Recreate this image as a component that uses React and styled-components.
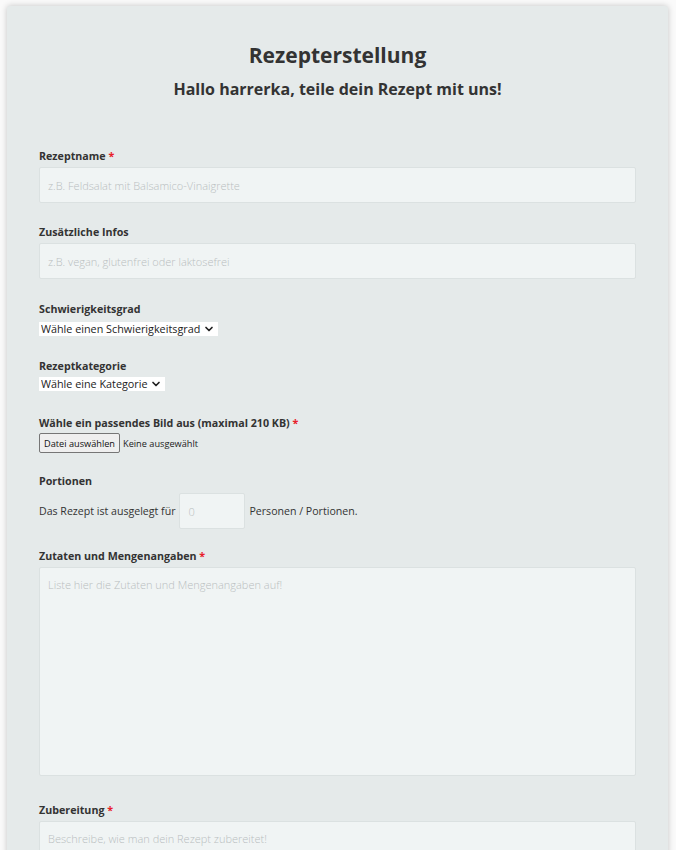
import React from "react";
import styled, { createGlobalStyle } from "styled-components";
import { ChevronDown } from "lucide-react";

const Global = createGlobalStyle`
    body {
        margin: 0;
        background: #fafafa;
        font-family: "Open Sans", "Liberation Sans", sans-serif;
        color: #333;
    }
`;

function Dropdown({ options, top }) {
    return (
        <SelectWrap $top={top}>
            <Select defaultValue="">
                {options.map((o) => (
                    <option key={o.value} value={o.value}>{o.label}</option>
                ))}
            </Select>
            <Chevron size={12} strokeWidth={3.4} />
        </SelectWrap>
    );
}

function App() {
    return (
        <Page>
            <Global />
            <Card>
                <Title>Rezepterstellung</Title>
                <Subtitle>Hallo harrerka, teile dein Rezept mit uns!</Subtitle>

                <Field $top={48}>
                    <Label>Rezeptname <Req>*</Req></Label>
                    <TextInput type="text" placeholder="z.B. Feldsalat mit Balsamico-Vinaigrette" />
                </Field>

                <Field $top={22}>
                    <Label>Zusätzliche Infos</Label>
                    <TextInput type="text" placeholder="z.B. vegan, glutenfrei oder laktosefrei" />
                </Field>

                <Field $top={23}>
                    <Label>Schwierigkeitsgrad</Label>
                    <Dropdown top={2} options={[
                        { value: "", label: "Wähle einen Schwierigkeitsgrad" },
                        { value: "1", label: "leicht" },
                        { value: "2", label: "mittel" },
                        { value: "3", label: "schwer" },
                    ]} />
                </Field>

                <Field $top={23}>
                    <Label>Rezeptkategorie</Label>
                    <Dropdown top={0} options={[
                        { value: "", label: "Wähle eine Kategorie" },
                        { value: "v", label: "Vorspeise" },
                        { value: "h", label: "Hauptspeise" },
                        { value: "d", label: "Dessert" },
                    ]} />
                </Field>

                <Field $top={25}>
                    <Label>Wähle ein passendes Bild aus (maximal 210 KB) <Req>*</Req></Label>
                    <FileRow>
                        <FileButton>
                            Datei auswählen
                            <HiddenFile type="file" accept="image/*" />
                        </FileButton>
                        <FileName>Keine ausgewählt</FileName>
                    </FileRow>
                </Field>

                <Field $top={21}>
                    <Label>Portionen</Label>
                    <PortionRow>
                        <span>Das Rezept ist ausgelegt für</span>
                        <NumberInput type="number" placeholder="0" />
                        <span>Personen / Portionen.</span>
                    </PortionRow>
                </Field>

                <Field $top={20}>
                    <Label>Zutaten und Mengenangaben <Req>*</Req></Label>
                    <TextArea $height={209} placeholder="Liste hier die Zutaten und Mengenangaben auf!" />
                </Field>

                <Field $top={27}>
                    <Label>Zubereitung <Req>*</Req></Label>
                    <TextArea $height={209} placeholder="Beschreibe, wie man dein Rezept zubereitet!" />
                </Field>
            </Card>
        </Page>
    );
}

export default App;

//styled-components
const Page = styled.div`
    padding: 6px 8px 40px 7px;
`;

const Card = styled.div`
    background-color: #e5eaea;
    border-radius: 3px;
    box-shadow: 0 0 6px rgba(0, 0, 0, 0.22);
    padding: 34px 32px 30px 32px;
`;

const Title = styled.h1`
    margin: 0;
    text-align: center;
    font-size: 21px;
    line-height: 30px;
    font-weight: 700;
    color: #333;
`;

const Subtitle = styled.h2`
    margin: 7px 0 0 0;
    text-align: center;
    font-size: 16px;
    line-height: 24px;
    font-weight: 700;
    color: #333;
`;

const Field = styled.div`
    margin-top: ${props => props.$top}px;
    display: flex;
    flex-direction: column;
    align-items: flex-start;
`;

const Label = styled.label`
    display: block;
    font-size: 10.7px;
    line-height: 14px;
    font-weight: 700;
    color: #333;
    margin-bottom: 4px;
`;

const Req = styled.span`
    color: #e8202a;
`;

const TextInput = styled.input`
    box-sizing: border-box;
    width: 100%;
    height: 36px;
    padding: 0 8px;
    border: 1px solid #dbe1e1;
    border-radius: 2px;
    background: #f0f4f4;
    font-family: "Open Sans", "Liberation Sans", sans-serif;
    font-size: 11px;
    font-weight: 300;
    color: #333;
    outline: none;
    &::placeholder {
        color: #b9bebf;
    }
`;

const TextArea = styled.textarea`
    box-sizing: border-box;
    width: 100%;
    height: ${props => props.$height}px;
    padding: 9px 8px;
    border: 1px solid #dbe1e1;
    border-radius: 2px;
    background: #f0f4f4;
    font-family: "Open Sans", "Liberation Sans", sans-serif;
    font-size: 11px;
    font-weight: 300;
    color: #333;
    resize: none;
    outline: none;
    &::placeholder {
        color: #b9bebf;
    }
`;

const SelectWrap = styled.div`
    position: relative;
    display: inline-flex;
    align-items: center;
    height: 14px;
    margin-top: ${props => props.$top}px;
    background: #fff;
`;

const Select = styled.select`
    appearance: none;
    -webkit-appearance: none;
    height: 14px;
    margin: 0;
    padding: 0 17px 0 2px;
    border: none;
    border-radius: 0;
    background: transparent;
    font-family: "Open Sans", "Liberation Sans", sans-serif;
    font-size: 10.8px;
    line-height: 14px;
    color: #222;
    outline: none;
`;

const Chevron = styled(ChevronDown)`
    position: absolute;
    right: 3px;
    top: 1px;
    color: #222;
    pointer-events: none;
`;

const FileRow = styled.div`
    display: flex;
    align-items: center;
    gap: 3px;
    margin-top: -1px;
`;

const FileButton = styled.label`
    box-sizing: border-box;
    height: 20px;
    padding: 0 4px;
    display: flex;
    align-items: center;
    border: 1px solid #767676;
    border-radius: 2px;
    background: #efefef;
    font-size: 9.2px;
    color: #111;
    cursor: pointer;
`;

const HiddenFile = styled.input`
    display: none;
`;

const FileName = styled.span`
    font-size: 9.2px;
    color: #222;
`;

const PortionRow = styled.div`
    display: flex;
    align-items: center;
    gap: 4px;
    font-size: 10.6px;
    color: #333;
    margin-top: 1px;
`;

const NumberInput = styled(TextInput)`
    width: 66px;
    height: 36px;
    appearance: textfield;
    &::-webkit-inner-spin-button,
    &::-webkit-outer-spin-button {
        -webkit-appearance: none;
        margin: 0;
    }
`;
